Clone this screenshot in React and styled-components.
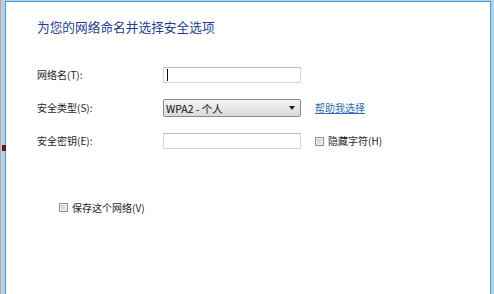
import styled, { createGlobalStyle } from "styled-components";

const GlobalStyle = createGlobalStyle`
  html, body {
    margin: 0;
    padding: 0;
    background: #ffffff;
  }
  body {
    font-family: "Noto Sans CJK SC", "Noto Sans", "Liberation Sans", sans-serif;
  }
`;

const App = () => {
  return (
    <>
      <GlobalStyle />
      <StyledWindow>
        <EdgeMark />
        <Panel>
          <Title>为您的网络命名并选择安全选项</Title>
          <Form>
            <Label>网络名(T):</Label>
            <TextBox>
              <Caret />
            </TextBox>
            <span />

            <Label>安全类型(S):</Label>
            <ComboBox>
              <span>WPA2 - 个人</span>
              <Arrow />
            </ComboBox>
            <Aside>
              <HelpLink href='#'>帮助我选择</HelpLink>
            </Aside>

            <Label>安全密钥(E):</Label>
            <TextBox />
            <Aside>
              <CheckLabel>
                <Check />
                隐藏字符(H)
              </CheckLabel>
            </Aside>
          </Form>
          <SaveRow>
            <CheckLabel>
              <Check />
              保存这个网络(V)
            </CheckLabel>
          </SaveRow>
        </Panel>
      </StyledWindow>
    </>
  );
};

const StyledWindow = styled.div`
  position: relative;
  display: flex;
  width: 494px;
  height: 294px;
  box-sizing: border-box;
  background: #a8d6ef;
  border-left: 1px solid #e29a86;
  padding: 1px 3px 0 4px;
`;
const EdgeMark = styled.span`
  position: absolute;
  left: 1px;
  top: 145px;
  width: 4px;
  height: 6px;
  background: #5a1d12;
`;
const Panel = styled.div`
  flex: 1;
  display: flex;
  flex-direction: column;
  background: #ffffff;
  border: 1px solid #4f96c9;
  border-bottom: none;
  padding: 17px 0 0 31px;
`;
const Title = styled.h1`
  margin: 0;
  font-size: 12.7px;
  font-weight: 400;
  line-height: 16px;
  color: #1f3d8c;
`;
const Form = styled.div`
  display: grid;
  grid-template-columns: 126px 138px auto;
  grid-template-rows: 16px 18px 16px;
  row-gap: 16px;
  align-items: center;
  margin-top: 32px;
`;
const Label = styled.span`
  font-size: 10px;
  line-height: 12px;
  color: #1e1e1e;
`;
const TextBox = styled.div`
  display: flex;
  align-items: center;
  height: 16px;
  box-sizing: border-box;
  padding-left: 3px;
  background: #ffffff;
  border: 1px solid #d3d6da;
  border-top-color: #bfc2c7;
`;
const Caret = styled.span`
  width: 1px;
  height: 12px;
  background: #111111;
`;
const ComboBox = styled.div`
  display: flex;
  align-items: center;
  justify-content: space-between;
  height: 18px;
  box-sizing: border-box;
  padding: 0 5px 0 2px;
  border: 1px solid #8a8a8a;
  border-radius: 2px;
  background: linear-gradient(#f5f5f5, #e6e6e6 50%, #dadada);
  font-size: 10.5px;
  color: #111111;
`;
const Arrow = styled.span`
  width: 0;
  height: 0;
  border-left: 3px solid transparent;
  border-right: 3px solid transparent;
  border-top: 4px solid #1a1a1a;
`;
const Aside = styled.div`
  padding-left: 14px;
  display: flex;
  align-items: center;
`;
const HelpLink = styled.a`
  font-size: 10px;
  line-height: 12px;
  color: #2f6db0;
  text-decoration: underline;
`;
const CheckLabel = styled.label`
  display: inline-flex;
  align-items: center;
  gap: 4px;
  font-size: 10px;
  line-height: 12px;
  color: #1e1e1e;
`;
const Check = styled.span`
  width: 9px;
  height: 9px;
  box-sizing: border-box;
  border: 1px solid #8f9092;
  background: linear-gradient(135deg, #c9cacc, #eeeeee);
  box-shadow: inset 0 0 0 1px #f2f2f2;
`;
const SaveRow = styled.div`
  margin: 44px 0 0 22px;
`;

export default App;
